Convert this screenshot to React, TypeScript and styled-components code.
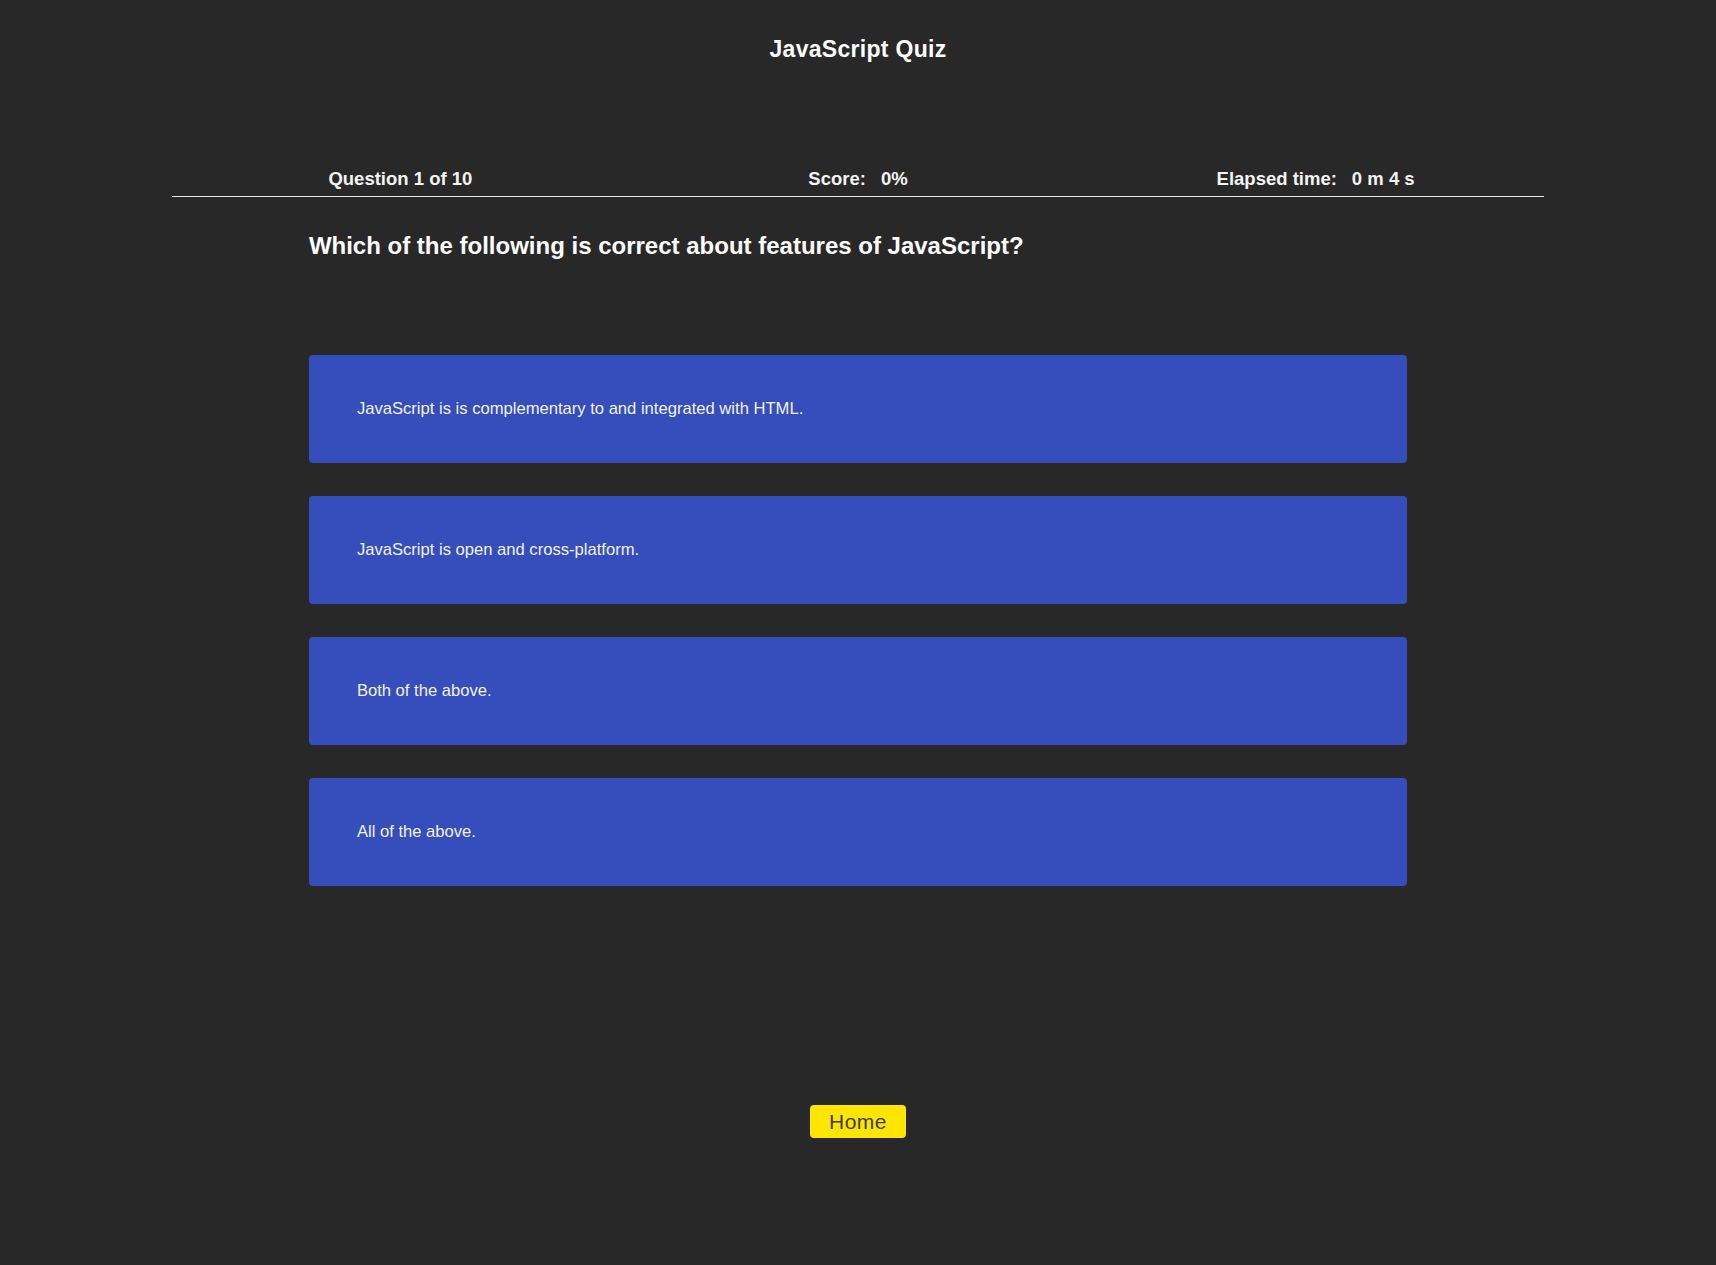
import React from "react";
import styled, { createGlobalStyle } from "styled-components";

const GlobalStyle = createGlobalStyle`
  html, body {
    margin: 0;
    padding: 0;
    background: #282828;
  }
  body {
    font-family: "Liberation Sans", Arial, sans-serif;
    color: #ffffff;
  }
`;

const Page = styled.div`
  min-height: 1265px;
  background: #282828;
  display: flex;
  flex-direction: column;
  align-items: center;
`;

const Title = styled.h1`
  margin: 0;
  padding-top: 36px;
  font-size: 23px;
  line-height: 26px;
  font-weight: 700;
  color: #ffffff;
  letter-spacing: 0.3px;
`;

const StatsBar = styled.div`
  width: 80%;
  margin-top: 104px;
  display: grid;
  grid-template-columns: repeat(3, 1fr);
  border-bottom: 1px solid #e8e8e8;
  padding-bottom: 4px;
`;

const Stat = styled.div`
  text-align: center;
  font-size: 18.5px;
  line-height: 26px;
  font-weight: 700;
  color: #f4f4f4;
`;

const StatValue = styled.span`
  margin-left: 15px;
`;

const Content = styled.div`
  width: 64%;
  display: flex;
  flex-direction: column;
`;

const Question = styled.h2`
  margin: 34px 0 0;
  font-size: 24px;
  line-height: 30px;
  font-weight: 700;
  color: #ffffff;
`;

const Options = styled.div`
  margin-top: 94px;
  display: flex;
  flex-direction: column;
  gap: 33px;
`;

const Option = styled.button`
  height: 108px;
  width: 100%;
  background: #354ebb;
  border: none;
  border-radius: 4px;
  padding: 0 0 0 48px;
  display: flex;
  align-items: center;
  text-align: left;
  font-family: "Liberation Sans", Arial, sans-serif;
  font-size: 16.6px;
  color: #f2f2f2;
  cursor: pointer;
`;

const Footer = styled.div`
  margin-top: 219px;
  display: flex;
  justify-content: center;
`;

const HomeButton = styled.button`
  width: 96px;
  height: 33px;
  background: #ffe500;
  border: none;
  border-radius: 4px;
  font-family: "Liberation Sans", Arial, sans-serif;
  font-size: 21px;
  color: #3d3d2a;
  letter-spacing: 0.5px;
  cursor: pointer;
`;

const options = [
  "JavaScript is is complementary to and integrated with HTML.",
  "JavaScript is open and cross-platform.",
  "Both of the above.",
  "All of the above.",
];

export default function App() {
  return (
    <>
      <GlobalStyle />
      <Page>
        <Title>JavaScript Quiz</Title>
        <StatsBar>
          <Stat>Question 1 of 10</Stat>
          <Stat>
            Score:<StatValue>0%</StatValue>
          </Stat>
          <Stat>
            Elapsed time:<StatValue>0 m 4 s</StatValue>
          </Stat>
        </StatsBar>
        <Content>
          <Question>Which of the following is correct about features of JavaScript?</Question>
          <Options>
            {options.map((o) => (
              <Option key={o}>{o}</Option>
            ))}
          </Options>
        </Content>
        <Footer>
          <HomeButton>Home</HomeButton>
        </Footer>
      </Page>
    </>
  );
}
